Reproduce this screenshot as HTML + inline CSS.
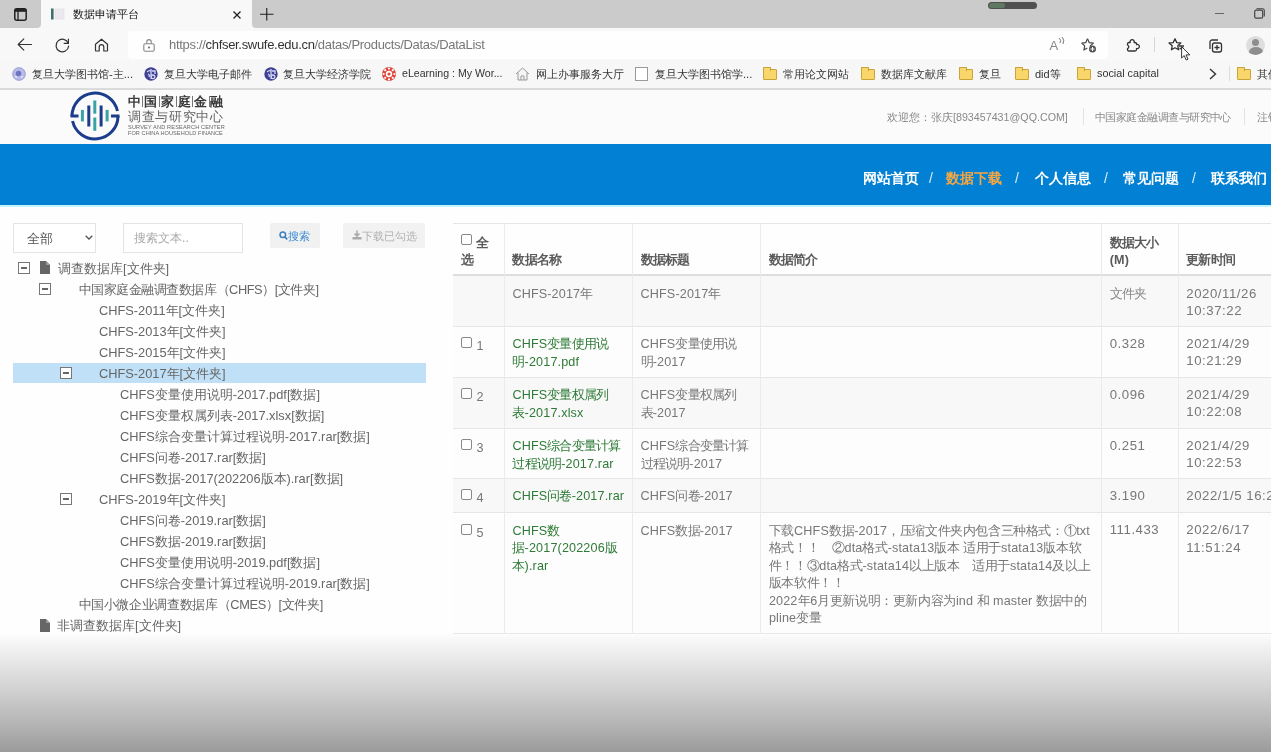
<!DOCTYPE html>
<html><head><meta charset="utf-8">
<style>
*{box-sizing:border-box;margin:0;padding:0}
html,body{width:1271px;height:752px;overflow:hidden;background:#fefefe;font-family:"Liberation Sans",sans-serif;color:#555}
.a{position:absolute;white-space:nowrap}
svg{position:absolute;overflow:visible}
#tabs{position:absolute;left:0;top:0;width:1271px;height:28px;background:#f8f8f8}
#tgl{position:absolute;left:0;top:0;width:41px;height:28px;background:#cbcbcb;border-bottom-right-radius:4px}
#tgr{position:absolute;left:252px;top:0;width:1019px;height:28px;background:#cbcbcb;border-bottom-left-radius:4px}
#tab{position:absolute;left:41px;top:0;width:211px;height:29px;background:#f7f7f7;border-radius:0 0 0 0}
#toolbar{position:absolute;left:0;top:28px;width:1271px;height:33px;background:#f8f8f8}
#addr{position:absolute;left:128px;top:31px;width:980px;height:28px;background:#fefefe;border-radius:4px}
#bm{position:absolute;left:0;top:61px;width:1271px;height:28px;background:#f7f7f7;border-bottom:1px solid #dcdcdc}
.bt{font-size:11.2px;color:#333;top:66.5px}
.fold{position:absolute;width:14px;height:11px;background:#f8d66a;border:1px solid #c9a43a;border-radius:1px;top:69px}
.fold:before{content:"";position:absolute;left:-1px;top:-3px;width:6px;height:3px;background:#f8d66a;border:1px solid #c9a43a;border-bottom:none;border-radius:1px 1px 0 0}
#hdr{position:absolute;left:0;top:89px;width:1271px;height:55px;background:#fbfbfb}
#blue{position:absolute;left:0;top:143.5px;width:1271px;height:61.5px;background:#0280d4}
#cyan{position:absolute;left:0;top:205px;width:1271px;height:1.5px;background:#c4f4fb}
.nav{font-size:14px;font-weight:bold;color:#fff;top:170px}
.sl{font-size:14px;color:#d8ecf8;top:170px}
.tr{font-size:12.8px;color:#666}
.mb{position:absolute;width:12px;height:12px;border:1.3px solid #777;background:#fff}
.mb:after{content:"";position:absolute;left:2px;top:4.2px;width:6px;height:1.4px;background:#666}
#tbl{position:absolute;left:453px;top:223px;width:830px;height:411px}
.hl{position:absolute;height:1px;background:#e6e6e8}
.vl{position:absolute;width:1px;background:#ebebef}
.cb{position:absolute;width:11px;height:11px;border:1px solid #888;border-radius:2px;background:#fff}
.t{font-size:12.6px;line-height:17.5px;color:#777;letter-spacing:0.15px}
.c{letter-spacing:-0.8px}
.desc .c{letter-spacing:-0.4px}
.g{color:#2e7b36}
.d{font-size:13.2px;letter-spacing:0.55px;margin-top:-1.5px}
.h{font-weight:bold;color:#5a5a5a}
#fade{position:absolute;left:0;top:633px;width:1271px;height:119px;background:linear-gradient(to bottom,rgba(252,252,252,0) 0%,rgba(248,248,248,.97) 5%,#e6e6e6 25%,#cfcfcf 50%,#b6b6b6 75%,#9b9b9b 100%)}
</style></head><body style="filter:blur(0.4px)">

<!-- tab strip -->
<div id="tabs"></div>
<div id="tgl"></div><div id="tgr"></div>
<svg style="left:14px;top:8px" width="13" height="13" viewBox="0 0 13 13"><rect x="0.8" y="0.8" width="11.4" height="11.4" rx="2" fill="none" stroke="#222" stroke-width="1.5"/><rect x="0.8" y="0.8" width="11.4" height="3" fill="#222"/><line x1="4" y1="3" x2="4" y2="12" stroke="#222" stroke-width="1.3"/></svg>
<svg style="left:51px;top:8px" width="14" height="12" viewBox="0 0 14 12"><rect x="0" y="0.5" width="2.6" height="11" fill="#3f6f75"/><rect x="4" y="1" width="9" height="10" fill="#ece8f0" stroke="#ddd" stroke-width=".6"/></svg>
<div class="a" style="left:73px;top:6.5px;font-size:11px;color:#111">数据申请平台</div>
<svg style="left:233px;top:11px" width="8" height="8" viewBox="0 0 8 8"><path d="M0.5 0.5L7.5 7.5M7.5 0.5L0.5 7.5" stroke="#222" stroke-width="1.3"/></svg>
<svg style="left:260px;top:7.5px" width="13.5" height="12.5" viewBox="0 0 13.5 12.5"><path d="M6.75 0V12.5M0 6.25H13.5" stroke="#222" stroke-width="1.15"/></svg>
<div style="position:absolute;left:988px;top:2px;width:49px;height:7px;border-radius:3.5px;background:#505050"></div>
<div style="position:absolute;left:989px;top:3px;width:16px;height:5px;border-radius:2.5px;background:#5f7862"></div>
<div style="position:absolute;left:1215px;top:13px;width:9px;height:1.2px;background:#666"></div>
<svg style="left:1254px;top:8px" width="11" height="11" viewBox="0 0 11 11"><rect x="0.7" y="2.2" width="8" height="8" rx="1.5" fill="none" stroke="#444" stroke-width="1.2"/><path d="M2.5 0.7H8.5A1.8 1.8 0 0 1 10.3 2.5V8.5" fill="none" stroke="#444" stroke-width="1.1"/></svg>

<!-- toolbar -->
<div id="toolbar"></div>
<div id="addr"></div>
<svg style="left:17px;top:38px" width="15" height="13" viewBox="0 0 15 13"><path d="M14.5 6.5H1.2M6.8 0.9L1.2 6.5L6.8 12.1" fill="none" stroke="#333" stroke-width="1.15" stroke-linejoin="round" stroke-linecap="round"/></svg>
<svg style="left:55px;top:37.5px" width="15" height="15" viewBox="0 0 15 15"><path d="M13.2 5.2A6.3 6.3 0 1 0 13.6 8.2" fill="none" stroke="#333" stroke-width="1.2" stroke-linecap="round"/><path d="M13.4 1.2V5.4H9.2" fill="none" stroke="#333" stroke-width="1.2" stroke-linecap="round" stroke-linejoin="round"/></svg>
<svg style="left:94px;top:37.5px" width="15" height="14" viewBox="0 0 15 14"><path d="M1.5 6.3L7.5 1.2L13.5 6.3V12.6Q13.5 13 13.1 13H9.8V9A2.3 2.3 0 0 0 5.2 9V13H1.9Q1.5 13 1.5 12.6Z" fill="none" stroke="#333" stroke-width="1.2" stroke-linejoin="round"/></svg>
<svg style="left:143px;top:38.5px" width="12" height="13" viewBox="0 0 12 13"><rect x="0.8" y="4.8" width="10.4" height="7.4" rx="1.5" fill="none" stroke="#888" stroke-width="1.1"/><path d="M3.8 4.8V2.8A2.2 2.2 0 0 1 8.2 2.8V4.8" fill="none" stroke="#888" stroke-width="1.1"/><circle cx="6" cy="8.5" r="0.9" fill="#555"/></svg>
<div class="a" style="left:169px;top:37px;font-size:13px;letter-spacing:-0.31px;color:#777">https://<span style="color:#333">chfser.swufe.edu.cn</span>/datas/Products/Datas/DataList</div>
<div class="a" style="left:1049.5px;top:37.5px;font-size:13px;color:#888">A</div>
<svg style="left:1058px;top:37px" width="7" height="8" viewBox="0 0 7 8"><path d="M1 1Q4 3 2 6M4 0Q7 3 5 7" fill="none" stroke="#777" stroke-width="1"/></svg>
<svg style="left:1081px;top:38px" width="16" height="15" viewBox="0 0 16 15"><path d="M6.5 0.8L8.3 4.7L12.4 5.1L9.3 7.9L10 11.9" fill="none" stroke="#444" stroke-width="1.2" stroke-linejoin="round"/><path d="M6.5 0.8L4.7 4.7L0.8 5.1L3.7 7.9L2.9 12L6.3 10" fill="none" stroke="#444" stroke-width="1.2" stroke-linejoin="round"/><circle cx="11.5" cy="11" r="3.5" fill="#555"/><path d="M11.5 9V13M9.5 11H13.5" stroke="#fff" stroke-width="1"/></svg>
<svg style="left:1126px;top:37.5px" width="15" height="15" viewBox="0 0 15 15"><path d="M1.5 6Q1.5 4.5 3 4.5H4.2A2.1 2.1 0 1 1 8.1 4.5H9Q10.5 4.5 10.5 6V6.6A2.1 2.1 0 1 1 10.5 10.5V11.5Q10.5 13 9 13H3Q1.5 13 1.5 11.5V10.6A1.9 1.9 0 0 0 1.5 7Z" fill="none" stroke="#333" stroke-width="1.3" stroke-linejoin="round"/></svg>
<div style="position:absolute;left:1154px;top:37px;width:1px;height:15px;background:#d6d6d6"></div>
<svg style="left:1168px;top:38px" width="17" height="13" viewBox="0 0 17 13"><path d="M7 0.8L8.8 4.6L12.8 5L9.8 7.8L10.6 11.8L7 9.8L3.4 11.8L4.2 7.8L1 5L5.2 4.6Z" fill="none" stroke="#333" stroke-width="1.3" stroke-linejoin="round"/><path d="M11 8H16M11.5 10.5H16" stroke="#333" stroke-width="1.3"/></svg>
<svg style="left:1181px;top:46px" width="12" height="15" viewBox="0 0 12 15"><path d="M0.6 0.6V12L3.2 9.6L5.2 14L7 13.2L5 8.9H8.8Z" fill="#fff" stroke="#222" stroke-width="0.9" stroke-linejoin="round"/></svg>
<svg style="left:1207px;top:38px" width="16" height="15" viewBox="0 0 16 15"><path d="M3 11V4A2 2 0 0 1 5 2H11" fill="none" stroke="#333" stroke-width="1.3"/><rect x="5.5" y="5" width="9" height="9" rx="2" fill="none" stroke="#333" stroke-width="1.3"/><path d="M10 7V12M7.5 9.5H12.5" stroke="#333" stroke-width="1.3"/></svg>
<div style="position:absolute;left:1246px;top:36px;width:19px;height:19px;border-radius:50%;background:#dedede;overflow:hidden"><div style="position:absolute;left:6px;top:3px;width:7px;height:7px;border-radius:50%;background:#8e8e8e"></div><div style="position:absolute;left:2.5px;top:11px;width:14px;height:10px;border-radius:50%;background:#8e8e8e"></div></div>

<!-- bookmarks -->
<div id="bm"></div>
<svg style="left:12px;top:67px" width="14" height="14" viewBox="0 0 14 14"><circle cx="7" cy="7" r="6.7" fill="#b9bde8"/><circle cx="7" cy="7" r="6.2" fill="none" stroke="#9fa4d8" stroke-width="1"/><circle cx="6.5" cy="6.5" r="2.8" fill="#6f74c2"/><circle cx="4" cy="10" r="1" fill="#e4e6f8"/><circle cx="10" cy="10" r="1" fill="#e4e6f8"/></svg>
<div class="a bt" style="left:32px">复旦大学图书馆-主...</div>
<svg style="left:143.5px;top:67px" width="14" height="14" viewBox="0 0 14 14"><circle cx="7" cy="7" r="6.7" fill="#3e4191"/><path d="M3 5Q5 3 7 4M7 2V12M8 4H11V7M4 7Q6 8 5 10M9 8A1.8 1.8 0 1 0 9.01 8" fill="none" stroke="#d4d6f6" stroke-width="1.3"/></svg>
<div class="a bt" style="left:164px">复旦大学电子邮件</div>
<svg style="left:263.5px;top:67px" width="14" height="14" viewBox="0 0 14 14"><circle cx="7" cy="7" r="6.7" fill="#3e4191"/><path d="M3 5Q5 3 7 4M7 2V12M8 4H11V7M4 7Q6 8 5 10M9 8A1.8 1.8 0 1 0 9.01 8" fill="none" stroke="#d4d6f6" stroke-width="1.3"/></svg>
<div class="a bt" style="left:283px">复旦大学经济学院</div>
<svg style="left:381px;top:66px" width="16" height="16" viewBox="0 0 16 16"><circle cx="8" cy="8" r="7" fill="#e0483c"/><circle cx="8" cy="8" r="3.2" fill="#fff"/><g fill="#fff"><circle cx="8" cy="2.6" r="1.1"/><circle cx="8" cy="13.4" r="1.1"/><circle cx="2.6" cy="8" r="1.1"/><circle cx="13.4" cy="8" r="1.1"/><circle cx="4.2" cy="4.2" r="1.1"/><circle cx="11.8" cy="11.8" r="1.1"/><circle cx="11.8" cy="4.2" r="1.1"/><circle cx="4.2" cy="11.8" r="1.1"/></g><circle cx="8" cy="8" r="1.6" fill="#e0483c"/></svg>
<div class="a bt" style="left:402px;font-size:10.6px;top:67px">eLearning : My Wor...</div>
<svg style="left:515px;top:67px" width="15" height="14" viewBox="0 0 15 14"><path d="M1 7L7.5 1L14 7M3 5.5V13H12V5.5M6 13V9H9V13" fill="#f4f4f4" stroke="#999" stroke-width="1"/></svg>
<div class="a bt" style="left:536px">网上办事服务大厅</div>
<div style="position:absolute;left:635px;top:67px;width:13px;height:14px;border:1px solid #999;background:#fff"></div>
<div class="a bt" style="left:655px">复旦大学图书馆学...</div>
<div class="fold" style="left:763px"></div>
<div class="a bt" style="left:783px">常用论文网站</div>
<div class="fold" style="left:861px"></div>
<div class="a bt" style="left:881px">数据库文献库</div>
<div class="fold" style="left:959px"></div>
<div class="a bt" style="left:979px">复旦</div>
<div class="fold" style="left:1015px"></div>
<div class="a bt" style="left:1035px;font-size:11px">did等</div>
<div class="fold" style="left:1077px"></div>
<div class="a bt" style="left:1097px;font-size:10.8px;top:67px">social capital</div>
<svg style="left:1209px;top:68px" width="8" height="12" viewBox="0 0 8 12"><path d="M1 1L6.5 6L1 11" fill="none" stroke="#333" stroke-width="1.4"/></svg>
<div style="position:absolute;left:1229px;top:66px;width:1px;height:15px;background:#ddd"></div>
<div class="fold" style="left:1237px"></div>
<div class="a bt" style="left:1257px">其他</div>

<!-- header -->
<div id="hdr"></div>
<div style="position:absolute;left:0;top:89px;width:1271px;height:1px;background:#d9d9d9"></div>
<svg style="left:69.5px;top:90.5px" width="50" height="50" viewBox="0 0 50 50">
<path d="M2 25A23 23 0 0 1 47.45 20" fill="none" stroke="#1c3c8c" stroke-width="3"/>
<path d="M48 25A23 23 0 0 1 2.55 30" fill="none" stroke="#1c3c8c" stroke-width="3"/>
<path d="M0.5 25H8.5M41 25H49.5" stroke="#1c3c8c" stroke-width="3"/>
<rect x="10.9" y="18.9" width="3" height="11.5" fill="#3aa3a6"/>
<rect x="17.3" y="14.5" width="3" height="21" fill="#1c3c8c"/>
<rect x="23.3" y="9.5" width="3" height="13.2" fill="#3aa3a6"/>
<rect x="23.3" y="26.5" width="3" height="13.3" fill="#3aa3a6"/>
<rect x="29.6" y="14.5" width="3" height="21" fill="#1c3c8c"/>
<rect x="35.6" y="18.9" width="3" height="11.5" fill="#3aa3a6"/>
</svg>
<div class="a" style="left:128.0px;top:93.3px;font-size:13px;font-weight:bold;color:#3a3a3a">中</div>
<div class="a" style="left:144.2px;top:93.3px;font-size:13px;font-weight:bold;color:#3a3a3a">国</div>
<div class="a" style="left:161.1px;top:93.3px;font-size:13px;font-weight:bold;color:#3a3a3a">家</div>
<div class="a" style="left:178.0px;top:93.3px;font-size:13px;font-weight:bold;color:#3a3a3a">庭</div>
<div class="a" style="left:194.1px;top:93.3px;font-size:13px;font-weight:bold;color:#3a3a3a">金</div>
<div class="a" style="left:210.3px;top:93.3px;font-size:13px;font-weight:bold;color:#3a3a3a">融</div>
<div style="position:absolute;left:141.7px;top:96.3px;width:1px;height:11px;background:#777"></div>
<div style="position:absolute;left:158.5px;top:96.3px;width:1px;height:11px;background:#777"></div>
<div style="position:absolute;left:175.6px;top:96.3px;width:1px;height:11px;background:#777"></div>
<div style="position:absolute;left:192.2px;top:96.3px;width:1px;height:11px;background:#777"></div>
<div style="position:absolute;left:208.7px;top:96.3px;width:1px;height:11px;background:#777"></div>
<div class="a" style="left:128px;top:107.5px;font-size:13px;color:#666;letter-spacing:0.65px">调查与研究中心</div>
<div class="a" style="left:128px;top:124px;font-size:5.6px;color:#666;letter-spacing:0.15px">SURVEY AND RESEARCH CENTER</div>
<div class="a" style="left:128px;top:130.3px;font-size:5.6px;color:#666;letter-spacing:0.05px">FOR CHINA HOUSEHOLD FINANCE</div>

<div class="a" style="left:887px;top:111px;font-size:10.7px;color:#888">欢迎您：张庆[893457431@QQ.COM]</div>
<div style="position:absolute;left:1083px;top:108px;width:1px;height:17px;background:#e4e4e4"></div>
<div class="a" style="left:1095px;top:110.5px;font-size:10.9px;letter-spacing:-0.55px;color:#888">中国家庭金融调查与研究中心</div>
<div style="position:absolute;left:1244px;top:108px;width:1px;height:17px;background:#e4e4e4"></div>
<div class="a" style="left:1257px;top:110.5px;font-size:10.9px;color:#888">注销</div>

<!-- blue nav -->
<div id="blue"></div>
<div id="cyan"></div>
<div class="a nav" style="left:863px">网站首页</div>
<div class="a sl" style="left:929px">/</div>
<div class="a nav" style="left:946px;color:#f5a742">数据下载</div>
<div class="a sl" style="left:1015px">/</div>
<div class="a nav" style="left:1035px">个人信息</div>
<div class="a sl" style="left:1104px">/</div>
<div class="a nav" style="left:1123px">常见问题</div>
<div class="a sl" style="left:1192px">/</div>
<div class="a nav" style="left:1211px">联系我们</div>

<!-- left controls -->
<div style="position:absolute;left:13px;top:223px;width:83px;height:30px;border:1px solid #e4e4e4;background:#fff"></div>
<div class="a" style="left:27px;top:229.5px;font-size:13.4px;color:#555">全部</div>
<svg style="left:85px;top:235px" width="8" height="5" viewBox="0 0 8 5"><path d="M0.7 0.7L4 4L7.3 0.7" fill="none" stroke="#555" stroke-width="1.3"/></svg>
<div style="position:absolute;left:123px;top:223px;width:120px;height:30px;border:1px solid #e4e4e4;background:#fff"></div>
<div class="a" style="left:134px;top:230px;font-size:12.4px;color:#aaa">搜索文本..</div>
<div style="position:absolute;left:270px;top:223px;width:50px;height:25px;background:#f1f1f2;border-radius:2px"></div>
<svg style="left:279px;top:231px" width="9" height="9" viewBox="0 0 9 9"><circle cx="3.8" cy="3.8" r="2.8" fill="none" stroke="#3a7fc0" stroke-width="1.5"/><path d="M5.8 5.8L8.3 8.3" stroke="#3a7fc0" stroke-width="1.7"/></svg>
<div class="a" style="left:288px;top:229px;font-size:11px;color:#3a8ad0">搜索</div>
<div style="position:absolute;left:343px;top:223px;width:82px;height:25px;background:#f2f2f3;border-radius:2px"></div>
<svg style="left:352px;top:230px" width="10" height="10" viewBox="0 0 10 10"><path d="M5 0.5V6M2.5 3.5L5 6L7.5 3.5" fill="none" stroke="#aaa" stroke-width="1.6"/><rect x="0.5" y="7" width="9" height="2.5" fill="#aaa"/></svg>
<div class="a" style="left:362px;top:229px;font-size:11px;color:#b0b0b0">下载已勾选</div>

<!-- tree -->
<div style="position:absolute;left:13px;top:363px;width:413px;height:20px;background:#bfe0f6"></div>
<div class="mb" style="left:18px;top:262px"></div>
<svg style="left:40px;top:261px" width="10" height="13" viewBox="0 0 10 13"><path d="M0 0H6L10 4V13H0Z" fill="#666"/><path d="M6 0V4H10" fill="#999"/></svg>
<div class="a tr" style="left:58px;top:261px">调查数据库[文件夹]</div>
<div class="mb" style="left:38.8px;top:283px"></div>
<div class="a tr" style="left:78.5px;top:282px;letter-spacing:-0.45px">中国家庭金融调查数据库（CHFS）[文件夹]</div>
<div class="a tr" style="left:99px;top:303px">CHFS-2011年[文件夹]</div>
<div class="a tr" style="left:99px;top:324px">CHFS-2013年[文件夹]</div>
<div class="a tr" style="left:99px;top:345px">CHFS-2015年[文件夹]</div>
<div class="mb" style="left:60px;top:367px"></div>
<div class="a tr" style="left:99px;top:366px">CHFS-2017年[文件夹]</div>
<div class="a tr" style="left:120px;top:387px">CHFS变量使用说明-2017.pdf[数据]</div>
<div class="a tr" style="left:120px;top:408px">CHFS变量权属列表-2017.xlsx[数据]</div>
<div class="a tr" style="left:120px;top:429px">CHFS综合变量计算过程说明-2017.rar[数据]</div>
<div class="a tr" style="left:120px;top:450px">CHFS问卷-2017.rar[数据]</div>
<div class="a tr" style="left:120px;top:471px">CHFS数据-2017(202206版本).rar[数据]</div>
<div class="mb" style="left:60px;top:493px"></div>
<div class="a tr" style="left:99px;top:492px">CHFS-2019年[文件夹]</div>
<div class="a tr" style="left:120px;top:513px">CHFS问卷-2019.rar[数据]</div>
<div class="a tr" style="left:120px;top:534px">CHFS数据-2019.rar[数据]</div>
<div class="a tr" style="left:120px;top:555px">CHFS变量使用说明-2019.pdf[数据]</div>
<div class="a tr" style="left:120px;top:576px">CHFS综合变量计算过程说明-2019.rar[数据]</div>
<div class="a tr" style="left:78.5px;top:597px;letter-spacing:-0.35px">中国小微企业调查数据库（CMES）[文件夹]</div>
<svg style="left:40px;top:619px" width="10" height="13" viewBox="0 0 10 13"><path d="M0 0H6L10 4V13H0Z" fill="#666"/><path d="M6 0V4H10" fill="#999"/></svg>
<div class="a tr" style="left:57px;top:618px">非调查数据库[文件夹]</div>

<!-- TABLE -->
<div style="position:absolute;left:453px;top:276px;width:818px;height:50px;background:#f8f8f9"></div>
<div style="position:absolute;left:453px;top:326px;width:818px;height:51px;background:#fdfdfd"></div>
<div style="position:absolute;left:453px;top:377px;width:818px;height:51px;background:#f8f8f9"></div>
<div style="position:absolute;left:453px;top:428px;width:818px;height:50px;background:#fdfdfd"></div>
<div style="position:absolute;left:453px;top:478px;width:818px;height:34.60000000000002px;background:#f8f8f9"></div>
<div style="position:absolute;left:453px;top:512.6px;width:818px;height:120.89999999999998px;background:#fdfdfd"></div>
<div class="hl" style="left:453px;top:222.5px;width:818px;background:#e6e6e6"></div>
<div class="hl" style="left:453px;top:274px;width:818px;height:2px;background:#dedede"></div>
<div class="hl" style="left:453px;top:325.5px;width:818px"></div>
<div class="hl" style="left:453px;top:376.5px;width:818px"></div>
<div class="hl" style="left:453px;top:427.5px;width:818px"></div>
<div class="hl" style="left:453px;top:477.5px;width:818px"></div>
<div class="hl" style="left:453px;top:512.1px;width:818px"></div>
<div class="hl" style="left:453px;top:633.0px;width:818px"></div>
<div class="vl" style="left:503.9px;top:223px;height:410.5px"></div>
<div class="vl" style="left:632.0px;top:223px;height:410.5px"></div>
<div class="vl" style="left:760.0px;top:223px;height:410.5px"></div>
<div class="vl" style="left:1101.1px;top:223px;height:410.5px"></div>
<div class="vl" style="left:1177.7px;top:223px;height:410.5px"></div>
<div class="cb" style="left:460.8px;top:234px"></div>
<div class="a t h" style="left:475.5px;top:234.5px;"><span class="c">全</span></div>
<div class="a t h" style="left:461px;top:252px;"><span class="c">选</span></div>
<div class="a t h" style="left:512.4px;top:252px;"><span class="c">数据名称</span></div>
<div class="a t h" style="left:640.5px;top:252px;"><span class="c">数据标题</span></div>
<div class="a t h" style="left:768.9px;top:252px;"><span class="c">数据简介</span></div>
<div class="a t h" style="left:1109.7px;top:234.5px;"><span class="c">数据大小</span><br>(M)</div>
<div class="a t h" style="left:1186.3px;top:252px;"><span class="c">更新时间</span></div>
<div class="a t" style="left:512.4px;top:286px;">CHFS-2017<span class="c">年</span></div>
<div class="a t" style="left:640.5px;top:286px;">CHFS-2017<span class="c">年</span></div>
<div class="a t" style="left:1109.7px;top:286px;"><span style="color:#888"><span class="c">文件夹</span></span></div>
<div class="a t d" style="left:1186.3px;top:286px;">2020/11/26<br>10:37:22</div>
<div class="cb" style="left:460.8px;top:337px"></div>
<div class="a t" style="left:476.5px;top:338px;">1</div>
<div class="a t g" style="left:512.4px;top:336px;">CHFS<span class="c">变量使用说</span><br><span class="c">明</span>-2017.pdf</div>
<div class="a t" style="left:640.5px;top:336px;">CHFS<span class="c">变量使用说</span><br><span class="c">明</span>-2017</div>
<div class="a t d" style="left:1109.7px;top:336px;">0.328</div>
<div class="a t d" style="left:1186.3px;top:336px;">2021/4/29<br>10:21:29</div>
<div class="cb" style="left:460.8px;top:388px"></div>
<div class="a t" style="left:476.5px;top:389px;">2</div>
<div class="a t g" style="left:512.4px;top:387px;">CHFS<span class="c">变量权属列</span><br><span class="c">表</span>-2017.xlsx</div>
<div class="a t" style="left:640.5px;top:387px;">CHFS<span class="c">变量权属列</span><br><span class="c">表</span>-2017</div>
<div class="a t d" style="left:1109.7px;top:387px;">0.096</div>
<div class="a t d" style="left:1186.3px;top:387px;">2021/4/29<br>10:22:08</div>
<div class="cb" style="left:460.8px;top:439px"></div>
<div class="a t" style="left:476.5px;top:440px;">3</div>
<div class="a t g" style="left:512.4px;top:438px;">CHFS<span class="c">综合变量计算</span><br><span class="c">过程说明</span>-2017.rar</div>
<div class="a t" style="left:640.5px;top:438px;">CHFS<span class="c">综合变量计算</span><br><span class="c">过程说明</span>-2017</div>
<div class="a t d" style="left:1109.7px;top:438px;">0.251</div>
<div class="a t d" style="left:1186.3px;top:438px;">2021/4/29<br>10:22:53</div>
<div class="cb" style="left:460.8px;top:489px"></div>
<div class="a t" style="left:476.5px;top:490px;">4</div>
<div class="a t g" style="left:512.4px;top:488px;">CHFS<span class="c">问卷</span>-2017.rar</div>
<div class="a t" style="left:640.5px;top:488px;">CHFS<span class="c">问卷</span>-2017</div>
<div class="a t d" style="left:1109.7px;top:488px;">3.190</div>
<div class="a t d" style="left:1186.3px;top:488px;">2022/1/5 16:25:13</div>
<div class="cb" style="left:460.8px;top:523.6px"></div>
<div class="a t" style="left:476.5px;top:524.6px;">5</div>
<div class="a t g" style="left:512.4px;top:522.6px;">CHFS<span class="c">数</span><br><span class="c">据</span>-2017(202206<span class="c">版</span><br><span class="c">本</span>).rar</div>
<div class="a t" style="left:640.5px;top:522.6px;">CHFS<span class="c">数据</span>-2017</div>
<div class="a t desc" style="left:768.9px;top:522.6px;"><span class="c">下载</span>CHFS<span class="c">数据</span>-2017<span class="c">，压缩文件夹内包含三种格式：①</span>txt<br><span class="c">格式！！　②</span>dta<span class="c">格式</span>-stata13<span class="c">版本</span> <span class="c">适用于</span>stata13<span class="c">版本软</span><br><span class="c">件！！③</span>dta<span class="c">格式</span>-stata14<span class="c">以上版本　适用于</span>stata14<span class="c">及以上</span><br><span class="c">版本软件！！</span><br>2022<span class="c">年</span>6<span class="c">月更新说明：更新内容为</span>ind <span class="c">和</span> master <span class="c">数据中的</span><br>pline<span class="c">变量</span></div>
<div class="a t d" style="left:1109.7px;top:522.6px;">111.433</div>
<div class="a t d" style="left:1186.3px;top:522.6px;">2022/6/17<br>11:51:24</div>
<div id="fade"></div>
</body></html>
